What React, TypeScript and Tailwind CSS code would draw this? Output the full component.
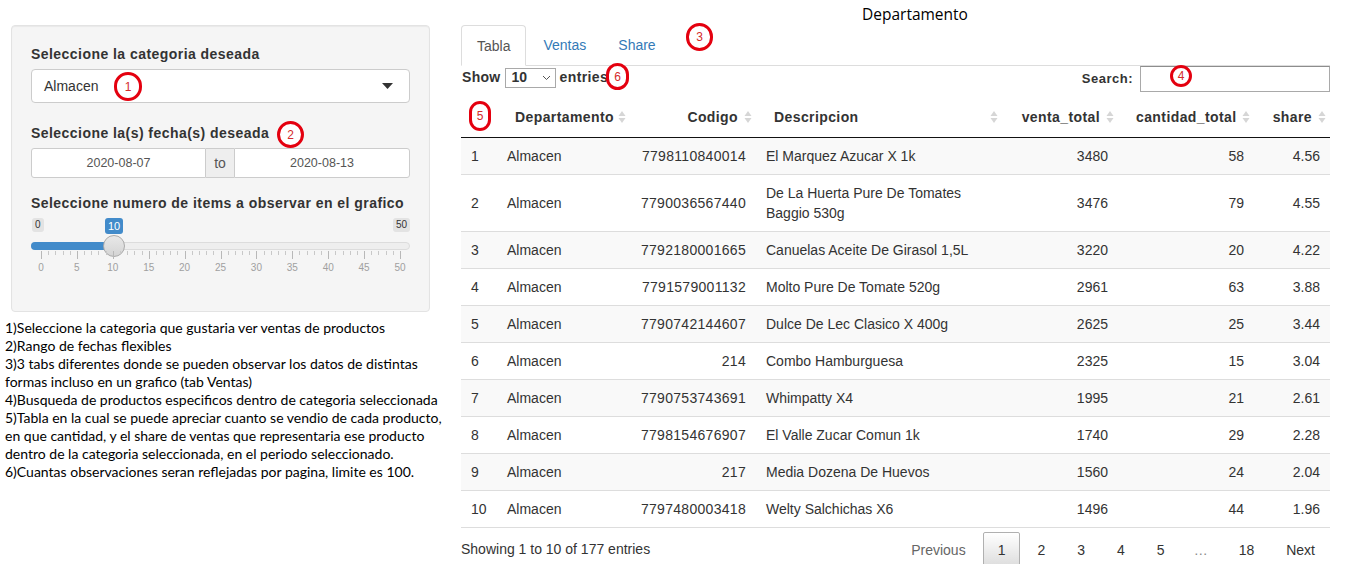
import React from 'react';

const rows = [
    { n: 1, cod: '7798110840014', desc: 'El Marquez Azucar X 1k', venta: 3480, cant: 58, share: '4.56' },
    { n: 2, cod: '7790036567440', desc: 'De La Huerta Pure De Tomates Baggio 530g', venta: 3476, cant: 79, share: '4.55' },
    { n: 3, cod: '7792180001665', desc: 'Canuelas Aceite De Girasol 1,5L', venta: 3220, cant: 20, share: '4.22' },
    { n: 4, cod: '7791579001132', desc: 'Molto Pure De Tomate 520g', venta: 2961, cant: 63, share: '3.88' },
    { n: 5, cod: '7790742144607', desc: 'Dulce De Lec Clasico X 400g', venta: 2625, cant: 25, share: '3.44' },
    { n: 6, cod: '214', desc: 'Combo Hamburguesa', venta: 2325, cant: 15, share: '3.04' },
    { n: 7, cod: '7790753743691', desc: 'Whimpatty X4', venta: 1995, cant: 21, share: '2.61' },
    { n: 8, cod: '7798154676907', desc: 'El Valle Zucar Comun 1k', venta: 1740, cant: 29, share: '2.28' },
    { n: 9, cod: '217', desc: 'Media Dozena De Huevos', venta: 1560, cant: 24, share: '2.04' },
    { n: 10, cod: '7797480003418', desc: 'Welty Salchichas X6', venta: 1496, cant: 44, share: '1.96' },
];

function SortIcon() {
    return (
        <svg className="absolute right-[4px] top-[13px]" width="8" height="14" viewBox="0 0 8 14">
            <polygon points="0.5,6 4,1 7.5,6" fill="#d6d6d6" />
            <polygon points="0.5,8 4,13 7.5,8" fill="#d6d6d6" />
        </svg>
    );
}

function Marker({ n, className }: { n: string; className: string }) {
    return (
        <div
            className={`absolute rounded-full border-[3px] border-[#e4000f] bg-white flex items-center justify-center text-[12px] leading-none text-[#d42a2a] font-['Liberation_Sans',sans-serif] ${className}`}
        >
            {n}
        </div>
    );
}

function Slider() {
    const majors = [0, 5, 10, 15, 20, 25, 30, 35, 40, 45, 50];
    const step = 35.9;
    return (
        <div className="relative h-[64px] w-[379px]">
            <div className="absolute left-[1px] top-[5px] h-[14px] px-[3px] rounded-[3px] bg-[#e3e3e3] text-[10px] leading-[14px] text-[#333]">0</div>
            <div className="absolute left-[74px] top-[5px] h-[16px] px-[3px] rounded-[3px] bg-[#428bca] text-[11px] leading-[16px] text-white">10</div>
            <div className="absolute right-[0px] top-[5px] h-[14px] px-[3px] rounded-[3px] bg-[#e3e3e3] text-[10px] leading-[14px] text-[#333]">50</div>
            <div className="absolute left-0 top-[29px] h-[8px] w-[379px] rounded-full border border-[#dcdcdc] bg-[#eee]" />
            <div className="absolute left-0 top-[29px] h-[8px] w-[83px] rounded-l-full bg-[#428bca]" />
            <div className="absolute left-[72px] top-[22px] h-[22px] w-[22px] rounded-full border border-[#aaa] bg-gradient-to-b from-[#e8e8e8] to-[#d4d4d4]" />
            {majors.map((m, i) => (
                <React.Fragment key={m}>
                    <div className="absolute top-[38px] h-[8px] w-px bg-[#b8b8b8]" style={{ left: 10 + i * step }} />
                    <div
                        className="absolute top-[49px] w-[20px] -ml-[10px] text-center text-[10px] leading-[12px] text-[#a0a0a0]"
                        style={{ left: 10 + i * step }}
                    >
                        {m}
                    </div>
                    {i < majors.length - 1 &&
                        [1, 2, 3, 4].map((k) => (
                            <div
                                key={k}
                                className="absolute top-[38px] h-[4px] w-px bg-[#c8c8c8]"
                                style={{ left: 10 + i * step + (k * step) / 5 }}
                            />
                        ))}
                </React.Fragment>
            ))}
        </div>
    );
}

export default function App() {
    return (
        <div className="relative w-[1360px] h-[564px] overflow-hidden bg-white text-[#333] font-['Liberation_Sans',Arial,sans-serif]">
            <div className="flex items-start">
                {/* Left column */}
                <div className="w-[425px] ml-[5px] shrink-0">
                    <div className="ml-[6px] mt-[25px] w-[419px] rounded-[4px] border border-[#e3e3e3] bg-[#f5f5f5] px-[19px] pt-[18px] pb-[19px] shadow-[inset_0_1px_1px_rgba(0,0,0,0.05)]">
                        <div className="text-[14px] font-bold leading-[20px] tracking-[0.45px] mb-[5px]">Seleccione la categoria deseada</div>
                        <div className="flex h-[34px] items-center justify-between rounded-[4px] border border-[#ccc] bg-white pl-[12px] pr-[16px] text-[14px] text-[#333]">
                            <span>Almacen</span>
                            <svg width="11" height="6" viewBox="0 0 11 6">
                                <polygon points="0,0 11,0 5.5,6" fill="#333" />
                            </svg>
                        </div>

                        <div className="mt-[20px] text-[14px] font-bold leading-[20px] tracking-[0.45px] mb-[5px]">Seleccione la(s) fecha(s) deseada</div>
                        <div className="flex h-[30px] text-[12.5px] text-[#555]">
                            <div className="flex w-[175px] items-center justify-center rounded-l-[3px] border border-[#ccc] bg-white">2020-08-07</div>
                            <div className="flex w-[28px] items-center justify-center border-y border-[#ccc] bg-[#eee] text-[14px]">to</div>
                            <div className="flex flex-1 items-center justify-center rounded-r-[3px] border border-[#ccc] bg-white">2020-08-13</div>
                        </div>

                        <div className="mt-[15px] text-[14px] font-bold leading-[20px] tracking-[0.45px] whitespace-nowrap">Seleccione numero de items a observar en el grafico</div>
                        <div className="mb-[15px]">
                            <Slider />
                        </div>
                    </div>

                    <div className="mt-[7px] whitespace-nowrap text-[14px] leading-[18px] text-black font-['Lato',sans-serif]">
                        1)Seleccione la categoria que gustaria ver ventas de productos
                        <br />
                        2)Rango de fechas flexibles
                        <br />
                        3)3 tabs diferentes donde se pueden observar los datos de distintas
                        <br />
                        formas incluso en un grafico (tab Ventas)
                        <br />
                        4)Busqueda de productos especificos dentro de categoria seleccionada
                        <br />
                        5)Tabla en la cual se puede apreciar cuanto se vendio de cada producto,
                        <br />
                        en que cantidad, y el share de ventas que representaria ese producto
                        <br />
                        dentro de la categoria seleccionada, en el periodo seleccionado.
                        <br />
                        6)Cuantas observaciones seran reflejadas por pagina, limite es 100.
                    </div>
                </div>

                {/* Right column */}
                <div className="ml-[31px] w-[869px] shrink-0">
                    <div className="h-[25px] pl-[401px] pt-[4px] text-[15.5px] leading-[20px] text-black font-['Open_Sans',sans-serif]">
                        Departamento
                    </div>

                    {/* Tabs */}
                    <div className="flex h-[41px] border-b border-[#ddd] text-[14px]">
                        <div className="relative -mb-px h-[41px] rounded-t-[4px] border border-[#ddd] border-b-white bg-white px-[15px] py-[10px] leading-[20px] text-[#555] mr-[2px]">
                            Tabla
                        </div>
                        <div className="px-[15px] py-[10px] leading-[20px] text-[#337ab7] mr-[2px]">Ventas</div>
                        <div className="px-[15px] py-[10px] leading-[20px] text-[#337ab7]">Share</div>
                    </div>

                    {/* Controls */}
                    <div className="flex h-[31px] items-start justify-between text-[14px]">
                        <div className="flex items-center pl-[1px] pt-[1px] font-bold">
                            <span className="tracking-[0.3px]">Show</span>
                            <div className="mx-[4px] flex h-[20px] w-[51px] items-center justify-between border border-[#a9a9a9] bg-white pl-[6px] pr-[4px] text-[14px] font-bold">
                                <span>10</span>
                                <svg width="9" height="6" viewBox="0 0 9 6">
                                    <polyline points="1,1 4.5,4.5 8,1" fill="none" stroke="#555" strokeWidth="1" />
                                </svg>
                            </div>
                            <span className="tracking-[0.4px]">entries</span>
                        </div>
                        <div className="flex items-center font-bold">
                            <span className="text-[13px] tracking-[0.5px]">Search:</span>
                            <div className="ml-[7px] h-[26px] w-[190px] border border-[#a9a9a9] border-t-[#8d8d8d] bg-white" />
                        </div>
                    </div>

                    {/* Table */}
                    <table className="w-[869px] table-fixed border-collapse text-[14px]">
                        <colgroup>
                            <col className="w-[36px]" />
                            <col className="w-[133px]" />
                            <col className="w-[126px]" />
                            <col className="w-[246px]" />
                            <col className="w-[116px]" />
                            <col className="w-[136px]" />
                            <col className="w-[76px]" />
                        </colgroup>
                        <thead>
                            <tr className="border-b border-[#111] tracking-[0.4px]">
                                <th className="h-[40px] px-[10px] py-[10px]" />
                                <th className="relative px-[18px] py-[10px] text-left leading-[20px] font-bold">Departamento<SortIcon /></th>
                                <th className="relative px-[18px] py-[10px] text-right leading-[20px] font-bold">Codigo<SortIcon /></th>
                                <th className="relative px-[18px] py-[10px] text-left leading-[20px] font-bold">Descripcion<SortIcon /></th>
                                <th className="relative px-[18px] py-[10px] text-right leading-[20px] font-bold">venta_total<SortIcon /></th>
                                <th className="relative px-[18px] py-[10px] text-right leading-[20px] font-bold">cantidad_total<SortIcon /></th>
                                <th className="relative px-[18px] py-[10px] text-right leading-[20px] font-bold">share<SortIcon /></th>
                            </tr>
                        </thead>
                        <tbody>
                            {rows.map((r, i) => (
                                <tr
                                    key={r.n}
                                    className={`${i % 2 === 0 ? 'bg-[#f9f9f9]' : 'bg-white'} ${i > 0 ? 'border-t border-[#ddd]' : ''} ${i === rows.length - 1 ? 'border-b border-[#111]' : ''}`}
                                >
                                    <td className="px-[10px] py-[8px] leading-[20px]">{r.n}</td>
                                    <td className="px-[10px] py-[8px] leading-[20px]">Almacen</td>
                                    <td className="px-[10px] py-[8px] leading-[20px] text-right tracking-[0.3px]">{r.cod}</td>
                                    <td className="px-[10px] py-[8px] leading-[20px]">{r.desc}</td>
                                    <td className="px-[10px] py-[8px] leading-[20px] text-right">{r.venta}</td>
                                    <td className="px-[10px] py-[8px] leading-[20px] text-right">{r.cant}</td>
                                    <td className="px-[10px] py-[8px] leading-[20px] text-right">{r.share}</td>
                                </tr>
                            ))}
                        </tbody>
                    </table>

                    {/* Footer */}
                    <div className="flex items-start justify-between text-[14px]">
                        <div className="pt-[11px] leading-[20px]">Showing 1 to 10 of 177 entries</div>
                        <div className="flex items-center pt-[4px] leading-[20px]">
                            <span className="ml-[2px] border border-transparent px-[14px] py-[7px] text-[#666]">Previous</span>
                            <span className="ml-[2px] rounded-[2px] border border-[#b0b0b0] bg-gradient-to-b from-white to-[#dcdcdc] px-[14px] py-[7px]">1</span>
                            <span className="ml-[2px] border border-transparent px-[14px] py-[7px]">2</span>
                            <span className="ml-[2px] border border-transparent px-[14px] py-[7px]">3</span>
                            <span className="ml-[2px] border border-transparent px-[14px] py-[7px]">4</span>
                            <span className="ml-[2px] border border-transparent px-[14px] py-[7px]">5</span>
                            <span className="px-[14px] py-[7px] text-[#888]">…</span>
                            <span className="ml-[2px] border border-transparent px-[14px] py-[7px]">18</span>
                            <span className="ml-[2px] border border-transparent px-[14px] py-[7px]">Next</span>
                        </div>
                    </div>
                </div>
            </div>

            {/* Annotation markers */}
            <Marker n="1" className="left-[114px] top-[72px] h-[29px] w-[28px]" />
            <Marker n="2" className="left-[277px] top-[121px] h-[27px] w-[27px]" />
            <Marker n="3" className="left-[686px] top-[23px] h-[28px] w-[27px]" />
            <Marker n="4" className="left-[1170px] top-[65px] h-[22px] w-[22px]" />
            <Marker n="5" className="left-[469px] top-[101px] h-[30px] w-[22px]" />
            <Marker n="6" className="left-[606px] top-[63px] h-[27px] w-[23px]" />
        </div>
    );
}
